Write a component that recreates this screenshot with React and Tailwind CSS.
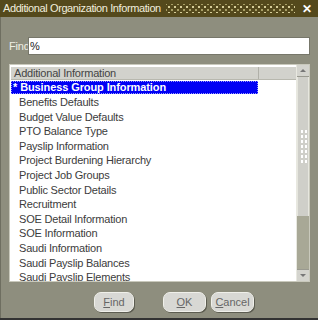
import React from "react";

const items = [
  "Benefits Defaults",
  "Budget Value Defaults",
  "PTO Balance Type",
  "Payslip Information",
  "Project Burdening Hierarchy",
  "Project Job Groups",
  "Public Sector Details",
  "Recruitment",
  "SOE Detail Information",
  "SOE Information",
  "Saudi Information",
  "Saudi Payslip Balances",
  "Saudi Payslip Elements",
];

const Btn = ({ children, className = "" }) => (
  <button
    className={`h-[20px] rounded-[7px] bg-[#d8d8d4] border border-[#f0f0ea] text-[11px] text-[#666] shadow-[1px_1px_0_#5c5c50] ${className}`}
  >
    {children}
  </button>
);

export default function App() {
  return (
    <div
      className="w-[318px] h-[320px] bg-[#8e8e7e] flex flex-col border-b-2 border-[#333] overflow-hidden"
      style={{ fontFamily: '"Liberation Sans", Arial, sans-serif' }}
    >
      {/* title bar */}
      <div className="h-[17px] bg-[#54491c] flex items-center pl-[3px] pr-[6px] shrink-0">
        <span className="text-[11px] text-[#f0eede] whitespace-nowrap tracking-[-0.4px]">
          Additional Organization Information
        </span>
        <div className="flex-1 h-[9px] ml-[5px] mr-[7px] bg-[radial-gradient(#d6cd98_0.8px,transparent_1.1px),radial-gradient(#a89f66_0.8px,transparent_1.1px)] bg-[length:6px_6px] bg-[position:0_0,3px_3px]"></div>
        <span className="text-white text-[12px] font-bold leading-none">✕</span>
      </div>

      <div className="flex-1 px-[8px] pt-[20px] flex flex-col border-l border-[#6e6e60]">
        {/* find row */}
        <div className="flex items-center h-[18px]">
          <span className="text-[11px] text-[#eeeee4] w-[19px] tracking-[-0.2px]">Find</span>
          <div className="flex-1 h-[18px] bg-white border border-[#77776a] text-[11px] text-[#222] pl-[1px] flex items-center">
            %
          </div>
        </div>

        {/* list */}
        <div className="mt-[9px] h-[218px] border border-[#c9c9bc] bg-white flex pt-[2px] pl-[1px]">
          <div className="flex-1 flex flex-col overflow-hidden">
            <div className="h-[13px] bg-[#d2d2cc] flex border-b border-[#b8b8ae] shrink-0">
              <div className="w-[248px] text-[11px] leading-[13px] text-[#444] pl-[3px] border-r border-[#b0b0a8] tracking-[-0.2px]">
                Additional Information
              </div>
            </div>
            <div className="pt-[1px]">
              <div className="h-[13px] bg-[#0000f4] border border-dotted border-[#9999ff] w-[247px] text-white font-bold text-[11px] leading-[11px] pl-[1px] mb-[1px] tracking-[-0.1px]">
                * Business Group Information
              </div>
              {items.map((t) => (
                <div key={t} className="h-[14.6px] text-[11px] leading-[14.6px] text-[#3c3c3c] pl-[8px] whitespace-nowrap tracking-[-0.2px]">
                  {t}
                </div>
              ))}
            </div>
          </div>
          {/* scrollbar */}
          <div className="w-[13px] bg-[#bcbcb0] flex flex-col border-l border-[#e8e8e0] -mt-[2px]">
            <div className="h-[12px] bg-[#d4d4ce] border-b border-[#9a9a90] flex items-center justify-center">
              <div className="w-0 h-0 border-l-[3px] border-r-[3px] border-b-[3px] border-l-transparent border-r-transparent border-b-[#777]"></div>
            </div>
            <div className="h-[139px] bg-[#cfcfc9] border-x border-[#e6e6de] flex items-center justify-center">
              <div className="w-[7px] h-[36px] bg-[radial-gradient(#ffffff_1px,transparent_1.3px)] bg-[length:4px_5px]"></div>
            </div>
            <div className="flex-1 bg-[#a8a896]"></div>
            <div className="h-[12px] bg-[#d4d4ce] border-t border-[#9a9a90] flex items-center justify-center">
              <div className="w-0 h-0 border-l-[3px] border-r-[3px] border-t-[3px] border-l-transparent border-r-transparent border-t-[#777]"></div>
            </div>
          </div>
        </div>

        {/* buttons */}
        <div className="flex items-center mt-[10px] pl-[85px]">
          <Btn className="w-[40px]">
            <span className="underline">F</span>ind
          </Btn>
          <Btn className="w-[43px] ml-[29px] border-[#333] border">
            <span className="underline">O</span>K
          </Btn>
          <Btn className="w-[43px] ml-[5px]">
            <span className="underline">C</span>ancel
          </Btn>
        </div>
      </div>
    </div>
  );
}
